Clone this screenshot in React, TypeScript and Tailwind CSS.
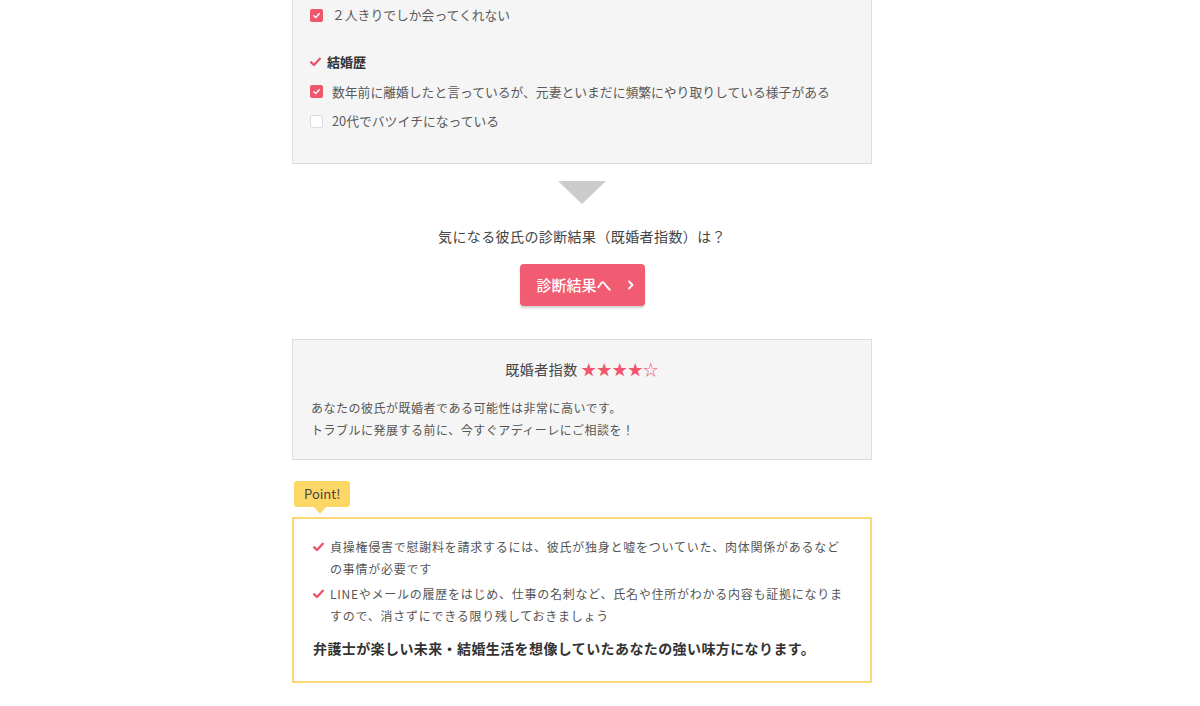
import type { ReactNode } from "react";

const font = { fontFamily: '"Noto Sans CJK JP", "Noto Sans", sans-serif' };

function Box({ checked }: { checked: boolean }) {
  if (!checked) {
    return <span className="inline-block h-[13px] w-[13px] shrink-0 rounded-[2px] border border-[#dcdcdc] bg-white" />;
  }
  return (
    <span className="inline-flex h-[13px] w-[13px] shrink-0 items-center justify-center rounded-[2px] bg-[#f0566c]">
      <svg width="9" height="9" viewBox="0 0 10 10" fill="none">
        <path d="M2 5.2 L4.2 7.3 L8 3" stroke="white" strokeWidth="1.6" strokeLinecap="round" strokeLinejoin="round" />
      </svg>
    </span>
  );
}

function Check({ className = "" }: { className?: string }) {
  return (
    <svg width="11" height="10" viewBox="0 0 11 10" className={className} fill="none">
      <path d="M1.2 5.3 L4 8 L9.8 1.8" stroke="#e9556a" strokeWidth="2.4" strokeLinecap="round" strokeLinejoin="round" />
    </svg>
  );
}

function Row({ checked, children, h }: { checked: boolean; children: ReactNode; h: string }) {
  return (
    <div className={`flex items-center gap-[9px] ${h}`}>
      <Box checked={checked} />
      <span className="text-[12.8px] text-[#5a5a5a]">{children}</span>
    </div>
  );
}

export default function App() {
  return (
    <div className="min-h-[706px] bg-white pl-[292px]" style={font}>
      <div className="w-[580px]">
        <div className="border border-t-0 border-[#dddddd] bg-[#f5f5f5] pb-[27px] pl-[17px]">
          <Row checked h="h-[30px]">２人きりでしか会ってくれない</Row>
          <div className="mt-[17px] flex h-[30px] items-center gap-[6px]">
            <Check />
            <span className="text-[13px] font-bold text-[#333]">結婚歴</span>
          </div>
          <Row checked h="h-[29px]">数年前に離婚したと言っているが、元妻といまだに頻繁にやり取りしている様子がある</Row>
          <Row checked={false} h="h-[30px]">20代でバツイチになっている</Row>
        </div>

        <div className="mt-[17px] flex justify-center">
          <div className="h-0 w-0 border-l-[24px] border-r-[24px] border-t-[23px] border-l-transparent border-r-transparent border-t-[#cccccc]" />
        </div>

        <p className="mt-[21px] text-center text-[14px] leading-[22px] tracking-[0.4px] text-[#444]">
          気になる彼氏の診断結果（既婚者指数）は？
        </p>

        <div className="mt-[17px] flex justify-center">
          <button className="relative flex h-[42px] w-[125px] items-center rounded-[4px] bg-[#f25c72] pl-[17px] text-[15px] font-medium text-white shadow-[0_2px_2px_rgba(0,0,0,0.18)]">
            診断結果へ
            <svg width="8" height="10" viewBox="0 0 8 10" className="absolute right-[10px] top-[16px]" fill="none">
              <path d="M2 1.5 L5.5 5 L2 8.5" stroke="white" strokeWidth="1.8" strokeLinecap="round" strokeLinejoin="round" />
            </svg>
          </button>
        </div>

        <div className="mt-[33px] border border-[#dddddd] bg-[#f5f5f5] px-[18px] pb-[18px] pt-[18px]">
          <p className="text-center text-[14px] leading-[22px] tracking-[0.5px] text-[#444]">
            既婚者指数 <span className="text-[15px] text-[#f0566c]">★★★★☆</span>
          </p>
          <div className="mt-[17px] text-[12px] leading-[22px] tracking-[0.5px] text-[#555]">
            <p>あなたの彼氏が既婚者である可能性は非常に高いです。</p>
            <p>トラブルに発展する前に、今すぐアディーレにご相談を！</p>
          </div>
        </div>

        <div className="ml-[2px] mt-[21px] relative inline-block rounded-[3px] bg-[#fcd766] px-[10px] text-[13px] leading-[26px] text-[#444]">
          Point!
          <span className="absolute left-[20px] top-[26px] h-0 w-0 border-l-[6px] border-r-[6px] border-t-[7px] border-l-transparent border-r-transparent border-t-[#fcd766]" />
        </div>

        <div className="mt-[10px] border-2 border-[#fbd974] bg-white pb-[21px] pl-[19px] pr-[20px] pt-[17px]">
          <div className="flex gap-[6px] text-[12px] leading-[22px] tracking-[0.75px] text-[#555]">
            <Check className="mt-[6px] shrink-0" />
            <p>
              貞操権侵害で慰謝料を請求するには、彼氏が独身と嘘をついていた、肉体関係があるなど
              <br />
              の事情が必要です
            </p>
          </div>
          <div className="mt-[3px] flex gap-[6px] text-[12px] leading-[22px] tracking-[0.75px] text-[#555]">
            <Check className="mt-[6px] shrink-0" />
            <p>
              LINEやメールの履歴をはじめ、仕事の名刺など、氏名や住所がわかる内容も証拠になりま
              <br />
              すので、消さずにできる限り残しておきましょう
            </p>
          </div>
          <p className="mt-[9px] text-[14px] font-bold leading-[24px] tracking-[0.4px] text-[#333]">
            弁護士が楽しい未来・結婚生活を想像していたあなたの強い味方になります。
          </p>
        </div>
      </div>
    </div>
  );
}
